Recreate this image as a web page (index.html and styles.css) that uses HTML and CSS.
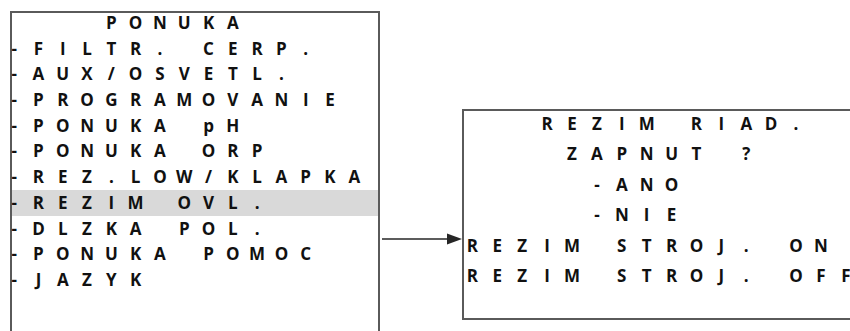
FILE: index.html
```html
<!doctype html>
<html lang="sk">
<head>
	<meta charset="utf-8">
	<title>Ponuka - Rezim riad.</title>
	<link rel="stylesheet" href="styles.css">
</head>

<body>
	<div class="diagram">
		<!-- main menu screen -->
		<section class="screen menu">
			<div class="lines">
				<div class="line">    PONUKA</div>
				<div class="line">-FILTR. CERP.</div>
				<div class="line">-AUX/OSVETL.</div>
				<div class="line">-PROGRAMOVANIE</div>
				<div class="line">-PONUKA pH</div>
				<div class="line">-PONUKA ORP</div>
				<div class="line">-REZ.LOW/KLAPKA</div>
				<div class="line selected">-REZIM OVL.</div>
				<div class="line">-DLZKA POL.</div>
				<div class="line">-PONUKA POMOC</div>
				<div class="line">-JAZYK</div>
			</div>
		</section>

		<svg class="arrow" width="80" height="14" viewBox="0 0 80 14">
			<line x1="0" y1="7" x2="68" y2="7" stroke="#262626" stroke-width="1.4"/>
			<polygon points="65,1.5 80,7 65,12.5" fill="#262626"/>
		</svg>

		<!-- sub screen -->
		<section class="screen sub">
			<div class="lines">
				<div class="line">   REZIM RIAD.</div>
				<div class="line">    ZAPNUT ?</div>
				<div class="line">     -ANO</div>
				<div class="line">     -NIE</div>
				<div class="line">REZIM STROJ. ON</div>
				<div class="line">REZIM STROJ. OFF</div>
			</div>
		</section>
	</div>

	<script>
	// split every line into fixed character cells, like the LCD grid
	document.querySelectorAll(".line").forEach(function (line) {
		var text = line.textContent;
		line.textContent = "";
		for (var i = 0; i < text.length; i++) {
			var cell = document.createElement("span");
			cell.className = "cell";
			cell.textContent = text[i];
			line.appendChild(cell);
		}
	});
	</script>
</body>
</html>
```

FILE: styles.css
```css
* {
	margin: 0;
	padding: 0;
	box-sizing: border-box;
}

html, body {
	overflow: hidden;
	background-color: #fff;
}

.diagram {
	display: flex;
	align-items: flex-start;
	width: 850px;
	height: 331px;
	overflow: hidden;
}

.screen {
	flex: none;
	border: 2px solid #5a5a5a;
	font-family: "Open Sans", "Noto Sans", sans-serif;
	font-weight: 700;
	font-size: 17px;
	color: #111;
}

.line {
	display: flex;
	white-space: pre;
}

.cell {
	display: inline-block;
	text-align: center;
	flex: none;
}

/* left screen */
.menu {
	margin: 11px 0 0 10px;
	width: 370px;
	height: 330px;
	border-bottom: none;
}
.menu .lines {
	margin-top: -3px;
}
.menu .line {
	height: 25.7px;
	line-height: 25.7px;
}
.menu .cell {
	width: 24.3px;
}
.menu .cell:first-child {
	margin-left: -10px;
}
.menu .selected {
	background-color: #d9d9d9;
}

.arrow {
	flex: none;
	margin: 232px 0 0 2px;
}

/* right screen */
.sub {
	margin-top: 109px;
	width: 400px;
	height: 211px;
	border-right: none;
}
.sub .lines {
	margin-top: -2px;
}
.sub .line {
	height: 30.4px;
	line-height: 30.4px;
}
.sub .cell {
	width: 24.9px;
}
.sub .cell:first-child {
	margin-left: -4px;
}
```
